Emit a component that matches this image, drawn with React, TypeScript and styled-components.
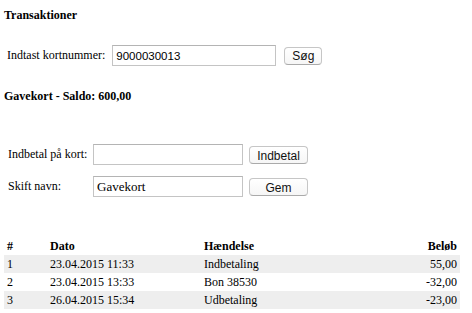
import React from "react";
import styled, { createGlobalStyle } from "styled-components";

const GlobalStyle = createGlobalStyle`
  body {
    margin: 0;
    background: #fff;
    color: #000;
    font-family: "Liberation Serif", "Times New Roman", serif;
    font-size: 12px;
  }
`;

interface Transaction {
  id: number;
  date: string;
  event: string;
  amount: string;
}

const transactions: Transaction[] = [
  { id: 1, date: "23.04.2015 11:33", event: "Indbetaling", amount: "55,00" },
  { id: 2, date: "23.04.2015 13:33", event: "Bon 38530", amount: "-32,00" },
  { id: 3, date: "26.04.2015 15:34", event: "Udbetaling", amount: "-23,00" },
];

const Page = styled.div`
  padding: 8px 0 0 4px;
  width: 456px;
`;

const Title = styled.h3`
  margin: 0;
  font-size: 12px;
  line-height: 15px;
  font-weight: bold;
`;

const SearchRow = styled.div`
  display: flex;
  align-items: center;
  margin-top: 22px;
  padding-left: 3px;
  height: 21px;
`;

const SearchLabel = styled.label`
  line-height: 15px;
  margin-right: 7px;
`;

const TextInput = styled.input<{ $width: number; $serif?: boolean }>`
  box-sizing: border-box;
  width: ${(p) => p.$width}px;
  height: 21px;
  margin: 0;
  padding: 1px 3px 0;
  border: 1px solid #c4c4c4;
  border-top-color: #b4b4b4;
  background: #fff;
  color: #000;
  font-family: ${(p) =>
    p.$serif
      ? `"Liberation Serif", "Times New Roman", serif`
      : `"Liberation Sans", Arial, sans-serif`};
  font-size: ${(p) => (p.$serif ? "13px" : "11.5px")};
  outline: none;
`;

const Button = styled.button<{ $width?: number }>`
  box-sizing: border-box;
  ${(p) => (p.$width ? `width: ${p.$width}px;` : "padding: 0 7px;")}
  height: 18px;
  margin: 0;
  border: 1px solid #c6c6c6;
  border-bottom-color: #aaaaaa;
  border-radius: 4px;
  background: linear-gradient(#ffffff, #f6f6f6);
  color: #111;
  font-family: "Liberation Sans", Arial, sans-serif;
  font-size: 12px;
  line-height: 16px;
`;

const SearchButton = styled(Button)`
  margin-left: 8px;
`;

const Balance = styled.h3`
  margin: 23px 0 0;
  font-size: 12px;
  line-height: 15px;
  font-weight: bold;
`;

const FormGrid = styled.div`
  display: grid;
  grid-template-columns: 79px 150px 59px;
  grid-auto-rows: 21px;
  column-gap: 6px;
  row-gap: 11px;
  align-items: center;
  margin-top: 40px;
  padding-left: 4px;
`;

const FieldLabel = styled.label`
  line-height: 15px;
  white-space: nowrap;
`;

const Table = styled.table`
  margin-top: 40px;
  width: 456px;
  border-collapse: collapse;
  font-size: 12px;
`;

const HeadCell = styled.th<{ $right?: boolean; $width?: number }>`
  height: 18px;
  padding: 0 3px;
  text-align: ${(p) => (p.$right ? "right" : "left")};
  font-weight: bold;
  ${(p) => (p.$width ? `width: ${p.$width}px;` : "")}
`;

const Row = styled.tr<{ $shaded: boolean }>`
  background: ${(p) => (p.$shaded ? "#eeeeee" : "#ffffff")};
`;

const Cell = styled.td<{ $right?: boolean }>`
  height: 18px;
  padding: 0 3px;
  text-align: ${(p) => (p.$right ? "right" : "left")};
`;

export default function App() {
  return (
    <Page>
      <GlobalStyle />
      <Title>Transaktioner</Title>

      <SearchRow>
        <SearchLabel>Indtast kortnummer:</SearchLabel>
        <TextInput $width={164} defaultValue="9000030013" />
        <SearchButton>Søg</SearchButton>
      </SearchRow>

      <Balance>Gavekort - Saldo: 600,00</Balance>

      <FormGrid>
        <FieldLabel>Indbetal på kort:</FieldLabel>
        <TextInput $width={150} $serif />
        <Button $width={59}>Indbetal</Button>
        <FieldLabel>Skift navn:</FieldLabel>
        <TextInput $width={150} $serif defaultValue="Gavekort" />
        <Button $width={59}>Gem</Button>
      </FormGrid>

      <Table>
        <thead>
          <tr>
            <HeadCell $width={37}>#</HeadCell>
            <HeadCell $width={148}>Dato</HeadCell>
            <HeadCell>Hændelse</HeadCell>
            <HeadCell $right>Beløb</HeadCell>
          </tr>
        </thead>
        <tbody>
          {transactions.map((t, i) => (
            <Row key={t.id} $shaded={i % 2 === 0}>
              <Cell>{t.id}</Cell>
              <Cell>{t.date}</Cell>
              <Cell>{t.event}</Cell>
              <Cell $right>{t.amount}</Cell>
            </Row>
          ))}
        </tbody>
      </Table>
    </Page>
  );
}
